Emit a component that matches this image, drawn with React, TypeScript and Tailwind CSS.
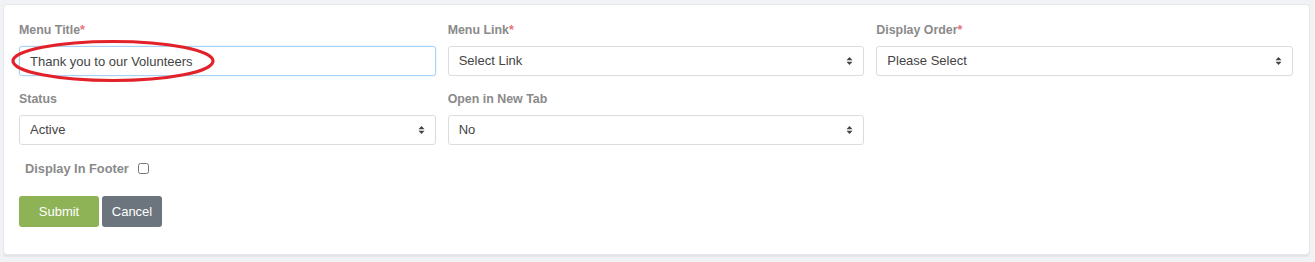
import { useState } from "react";

const font = { fontFamily: '"Liberation Sans", Arial, sans-serif' };

const Label = ({ text, required }: { text: string; required?: boolean }) => (
  <label className="block text-[12.4px] leading-[17px] font-bold text-[#8a8a8a] mb-[7px]">
    {text}
    {required && <span className="text-[#e8707a]">*</span>}
  </label>
);

const Arrows = () => (
  <svg
    width="7"
    height="10"
    viewBox="0 0 7 10"
    className="absolute right-[11px] top-1/2 -translate-y-1/2 pointer-events-none"
  >
    <path d="M3.5 1 L6.5 4.2 H0.5 Z" fill="#444" />
    <path d="M3.5 9 L6.5 5.8 H0.5 Z" fill="#444" />
  </svg>
);

const Select = ({ value, options }: { value: string; options: string[] }) => (
  <div className="relative">
    <select
      defaultValue={value}
      className="w-full h-[30px] appearance-none bg-white border border-[#d9dde2] rounded-[3px] pl-[10px] pr-6 text-[13px] text-[#444] outline-none"
      style={font}
    >
      {options.map((o) => (
        <option key={o}>{o}</option>
      ))}
    </select>
    <Arrows />
  </div>
);

export default function App() {
  const [title, setTitle] = useState("Thank you to our Volunteers");

  return (
    <div className="w-full h-[262px] bg-[#f1f2f6] pt-1 pl-[3px] pr-[5px]" style={font}>
      <div className="bg-white rounded-[4px] border border-[#e6e7eb] shadow-[0_2px_1px_rgba(0,0,0,0.06)] pt-[17px] pl-[15px] pr-[16px] pb-[27px]">
        <div className="grid grid-cols-3 gap-x-3">
          <div className="relative">
            <Label text="Menu Title" required />
            <input
              value={title}
              onChange={(e) => setTitle(e.target.value)}
              className="w-full h-[30px] border border-[#a9d0f5] rounded-[3px] pl-[10px] text-[13px] text-[#444] outline-none shadow-[0_0_2px_rgba(102,175,233,0.35)]"
              style={font}
            />
            {/* red hand-drawn highlight */}
            <svg
              width="206"
              height="46"
              viewBox="0 0 206 46"
              className="absolute left-[-9px] top-[16px] pointer-events-none"
            >
              <ellipse
                cx="103"
                cy="23"
                rx="100"
                ry="19.5"
                fill="none"
                stroke="#e3212b"
                strokeWidth="3.2"
              />
            </svg>
          </div>
          <div>
            <Label text="Menu Link" required />
            <Select value="Select Link" options={["Select Link"]} />
          </div>
          <div>
            <Label text="Display Order" required />
            <Select value="Please Select" options={["Please Select"]} />
          </div>

          <div className="mt-[15px]">
            <Label text="Status" />
            <Select value="Active" options={["Active", "Inactive"]} />
          </div>
          <div className="mt-[15px]">
            <Label text="Open in New Tab" />
            <Select value="No" options={["No", "Yes"]} />
          </div>
          <div />
        </div>

        <div className="flex items-center gap-[9px] mt-[15px] pl-[6px]">
          <span className="text-[12.8px] leading-[17px] font-bold text-[#8a8a8a]">Display In Footer</span>
          <input type="checkbox" className="w-[11px] h-[11px] m-0" />
        </div>

        <div className="flex gap-[3px] mt-[19px]">
          <button className="w-[80px] h-[31px] rounded-[3px] bg-[#8db356] text-white text-[13px]">
            Submit
          </button>
          <button className="w-[60px] h-[31px] rounded-[3px] bg-[#6c757d] text-white text-[13px]">
            Cancel
          </button>
        </div>
      </div>
    </div>
  );
}
